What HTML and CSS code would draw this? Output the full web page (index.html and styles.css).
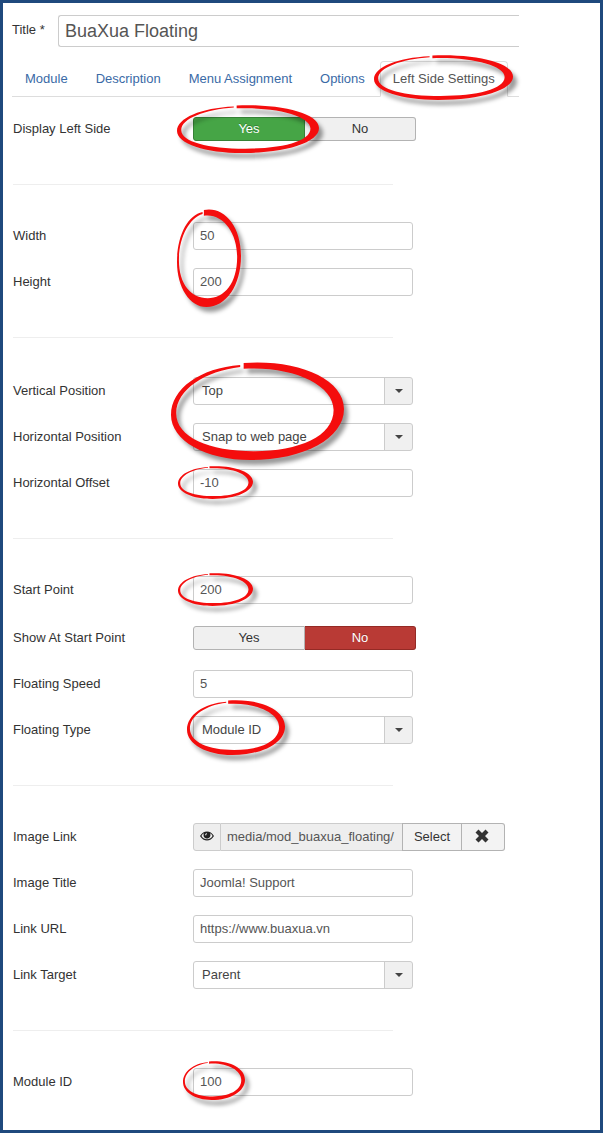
FILE: index.html
```html
<!DOCTYPE html>
<html lang="en">
<head>
    <meta charset="UTF-8">
    <meta name="viewport" content="width=device-width, initial-scale=1.0">
    <title>BuaXua Floating</title>
    <link rel="stylesheet" href="styles.css">
</head>
<body>

    <!-- shared shapes -->
    <svg class="sprite" aria-hidden="true">
        <symbol id="ring" viewBox="0 0 100 100" preserveAspectRatio="none">
            <path d="M42 1C72 -3 100 16 100 48C100 78 77 100 46 100C20 100 0 80 0 54C0 27 17 6 40 3L40 5C20 9 3 28 3 52C3 77 22 91 48 91C74 91 94 76 94 49C94 23 70 4 42 7Z"/>
        </symbol>
        <symbol id="eye" viewBox="0 0 14 10">
            <path fill-rule="evenodd" d="M0 5C2 1.700 4.300 .5 7 .5S12 1.700 14 5C12 8.300 9.700 9.500 7 9.500S2 8.300 0 5ZM1.500 5C2.300 6.600 4.300 8.200 7 8.200S11.700 6.600 12.500 5C12 3.800 11 2.800 10 2.300C11.300 5 9.700 7.600 7 7.600S2.700 5 4 2.300C3 2.800 2 3.800 1.500 5ZM5.200 3.800C5.200 4.700 6.400 4.700 6.400 3.800C6.400 3.200 7 3.100 7 2.600C7 1.900 5.200 2.300 5.200 3.800Z"/>
        </symbol>
        <symbol id="remove" viewBox="0 0 14 14">
            <path d="M3.500 .5L7 4L10.500 .5L13.500 3.500L10 7L13.500 10.500L10.500 13.500L7 10L3.500 13.500L.5 10.500L4 7L.5 3.500Z"/>
        </symbol>
    </svg>

    <form class="page">
        <div class="title-row">
            <label for="title">Title *</label>
            <input type="text" id="title" value="BuaXua Floating">
        </div>

        <ul class="tabs">
            <li><a href="#module">Module</a></li>
            <li><a href="#description">Description</a></li>
            <li><a href="#assignment">Menu Assignment</a></li>
            <li><a href="#options">Options</a></li>
            <li class="active">
                <a href="#left">Left Side Settings</a>
                <svg class="ring ring-tab" aria-hidden="true"><use href="#ring"/></svg>
            </li>
        </ul>

        <div class="fields" id="left">
            <div class="row toggle-row" role="radiogroup" aria-labelledby="display-label">
                <span class="row-label" id="display-label">Display Left Side</span>
                <div class="controls toggle">
                    <input type="radio" id="display-yes" name="display" value="1" checked>
                    <label class="yes" for="display-yes">Yes</label>
                    <input type="radio" id="display-no" name="display" value="0">
                    <label class="no" for="display-no">No</label>
                    <svg class="ring ring-yes" aria-hidden="true"><use href="#ring"/></svg>
                </div>
            </div>

            <hr>

            <div class="row">
                <label class="row-label" for="width">Width</label>
                <div class="controls">
                    <input type="text" id="width" value="50">
                    <svg class="ring ring-size" aria-hidden="true"><use href="#ring"/></svg>
                </div>
            </div>
            <div class="row">
                <label class="row-label" for="height">Height</label>
                <div class="controls">
                    <input type="text" id="height" value="200">
                </div>
            </div>

            <hr>

            <div class="position-fields">
                <div class="row">
                    <label class="row-label" for="vertical">Vertical Position</label>
                    <div class="controls dropdown">
                        <select id="vertical">
                            <option>Top</option>
                            <option>Bottom</option>
                        </select>
                        <svg class="ring ring-position" aria-hidden="true"><use href="#ring"/></svg>
                    </div>
                </div>
                <div class="row">
                    <label class="row-label" for="horizontal">Horizontal Position</label>
                    <div class="controls dropdown">
                        <select id="horizontal">
                            <option>Snap to web page</option>
                        </select>
                    </div>
                </div>
                <div class="row">
                    <label class="row-label" for="offset">Horizontal Offset</label>
                    <div class="controls">
                        <input type="text" id="offset" value="-10">
                        <svg class="ring ring-offset" aria-hidden="true"><use href="#ring"/></svg>
                    </div>
                </div>
            </div>

            <hr>

            <div class="row">
                <label class="row-label" for="start">Start Point</label>
                <div class="controls">
                    <input type="text" id="start" value="200">
                    <svg class="ring ring-start" aria-hidden="true"><use href="#ring"/></svg>
                </div>
            </div>
            <div class="row toggle-row" role="radiogroup" aria-labelledby="show-label">
                <span class="row-label" id="show-label">Show At Start Point</span>
                <div class="controls toggle">
                    <input type="radio" id="show-yes" name="show" value="1">
                    <label class="yes" for="show-yes">Yes</label>
                    <input type="radio" id="show-no" name="show" value="0" checked>
                    <label class="no" for="show-no">No</label>
                </div>
            </div>
            <div class="row">
                <label class="row-label" for="speed">Floating Speed</label>
                <div class="controls">
                    <input type="text" id="speed" value="5">
                </div>
            </div>
            <div class="row">
                <label class="row-label" for="type">Floating Type</label>
                <div class="controls dropdown">
                    <select id="type">
                        <option>Module ID</option>
                    </select>
                    <svg class="ring ring-type" aria-hidden="true"><use href="#ring"/></svg>
                </div>
            </div>

            <hr>

            <div class="row">
                <label class="row-label" for="image">Image Link</label>
                <div class="media">
                    <span class="preview"><svg class="icon-eye" aria-hidden="true"><use href="#eye"/></svg></span>
                    <input type="text" id="image" value="media/mod_buaxua_floating/" readonly>
                    <button type="button" class="select-btn">Select</button>
                    <button type="button" class="clear-btn" aria-label="Clear"><svg class="icon-remove" aria-hidden="true"><use href="#remove"/></svg></button>
                </div>
            </div>
            <div class="row">
                <label class="row-label" for="image-title">Image Title</label>
                <div class="controls">
                    <input type="text" id="image-title" value="Joomla! Support">
                </div>
            </div>
            <div class="row">
                <label class="row-label" for="url">Link URL</label>
                <div class="controls">
                    <input type="text" id="url" value="https://www.buaxua.vn">
                </div>
            </div>
            <div class="row">
                <label class="row-label" for="target">Link Target</label>
                <div class="controls dropdown">
                    <select id="target">
                        <option>Parent</option>
                    </select>
                </div>
            </div>

            <hr>

            <div class="row">
                <label class="row-label" for="module-id">Module ID</label>
                <div class="controls">
                    <input type="text" id="module-id" value="100">
                    <svg class="ring ring-module" aria-hidden="true"><use href="#ring"/></svg>
                </div>
            </div>
        </div>
    </form>

</body>
</html>
```

FILE: styles.css
```css
* {
    box-sizing: border-box;
}
body {
    margin: 0;
    min-height: 100vh;
    border: 3px solid #1f497d;
    background-color: #fff;
    color: #333;
    font-family: "Liberation Sans", Arial, sans-serif;
    font-size: 13px;
    line-height: 18px;
}
input, select, button {
    font: inherit;
    color: #555;
}
.sprite {
    position: absolute;
    width: 0;
    height: 0;
}
.page {
    padding: 12px 81px 0 9px;
}

/* title */
.title-row {
    display: flex;
    gap: 14px;
}
.title-row label {
    flex: none;
    width: 32px;
    padding-top: 6px;
    white-space: nowrap;
}
.title-row input {
    flex: 1;
    min-width: 0;
    height: 32px;
    padding: 0 6px;
    border: 1px solid #ccc;
    border-right: 0;
    border-radius: 3px 0 0 3px;
    font-size: 18px;
}

/* tabs */
.tabs {
    display: flex;
    gap: 2px;
    margin: 14px 0 16px;
    padding: 0;
    list-style: none;
    border-bottom: 1px solid #ddd;
}
.tabs li {
    position: relative;
    margin-bottom: -1px;
}
.tabs a {
    display: block;
    padding: 8px 12px;
    border: 1px solid transparent;
    border-radius: 4px 4px 0 0;
    color: #3a6aa6;
    text-decoration: none;
    white-space: nowrap;
}
.tabs .active a {
    background-color: #fff;
    border-color: #ddd #ddd #fff;
    color: #555;
}

/* fields */
.fields {
    padding-left: 1px;
}
.row {
    display: flex;
    margin-bottom: 18px;
}
.row-label {
    flex: none;
    width: 180px;
    padding-top: 5px;
}
.toggle-row .row-label {
    padding-top: 7px;
}
.controls {
    position: relative;
    width: 220px;
}
.controls input[type="text"], .controls select {
    display: block;
    width: 100%;
    height: 28px;
    padding: 0 6px 2px;
    border: 1px solid #ccc;
    border-radius: 3px;
    background-color: #fff;
}
hr {
    max-width: 380px;
    height: 1px;
    margin: 41px 0 37px;
    border: 0;
    background-color: #eee;
}
.position-fields {
    padding-top: 2px;
}

.controls select {
    appearance: none;
    padding: 0 36px 0 8px;
    color: #444;
    background-image: linear-gradient(to right, #ccc 1px, #f0f0f0 1px);
    background-position: right;
    background-repeat: no-repeat;
    background-size: 28px 100%;
}
.dropdown::after {
    content: "";
    position: absolute;
    top: 12px;
    right: 10px;
    border: 4px solid transparent;
    border-top-color: #444;
    border-bottom: 0;
    pointer-events: none;
}

/* yes / no switch */
.controls.toggle {
    display: flex;
    width: 223px;
    padding: 4px 0 2px;
}
.toggle input {
    position: absolute;
    opacity: 0;
}
.toggle label {
    flex: 1;
    height: 24px;
    line-height: 22px;
    text-align: center;
    border: 1px solid #b3b3b3;
    background-color: #f0f0f0;
}
.toggle .yes {
    border-radius: 3px 0 0 3px;
}
.toggle .no {
    border-left: 0;
    border-radius: 0 3px 3px 0;
}
.toggle input:checked + label {
    color: #fff;
    text-shadow: 0 -1px 0 rgba(0, 0, 0, 0.25);
}
.toggle input:checked + .yes {
    background-color: #46a546;
    border-color: #378137;
}
.toggle input:checked + .no {
    background-color: #b93a35;
    border-color: #942a25;
}

/* image picker */
.media {
    display: flex;
    height: 28px;
}
.media input {
    width: 181px;
    padding: 0 6px;
    border: 1px solid #ccc;
    border-width: 1px 0;
    background-color: #eee;
}
.preview {
    display: flex;
    align-items: center;
    justify-content: center;
    width: 28px;
    padding-bottom: 3px;
    border: 1px solid #ccc;
    border-radius: 3px 0 0 3px;
    background-color: #eee;
}
.media button {
    padding: 0;
    border: 1px solid #b3b3b3;
    background-color: #f3f3f3;
    color: #333;
}
.media .select-btn {
    width: 60px;
}
.media .clear-btn {
    display: flex;
    align-items: center;
    justify-content: center;
    width: 43px;
    padding: 0 3px 3px 0;
    border-left: 0;
    border-radius: 0 3px 3px 0;
}
.icon-eye {
    width: 14px;
    height: 10px;
    fill: #222;
}
.icon-remove {
    width: 14px;
    height: 14px;
    fill: #333;
}

/* red rings around the settings to change */
.ring {
    position: absolute;
    z-index: 1;
    overflow: visible;
    fill: #f40d0d;
    filter: drop-shadow(4px 5px 2px rgba(0, 0, 0, 0.4));
    pointer-events: none;
}
.ring-tab {
    top: -6px;
    left: -6px;
    width: 139px;
    height: 45px;
}
.ring-yes {
    top: -8px;
    left: -16px;
    width: 142px;
    height: 48px;
}
.ring-size {
    top: -13px;
    left: -16px;
    width: 64px;
    height: 98px;
}
.ring-position {
    top: -15px;
    left: -22px;
    width: 173px;
    height: 98px;
}
.ring-offset, .ring-start {
    top: -3px;
    left: -15px;
    width: 75px;
    height: 33px;
}
.ring-type {
    top: -16px;
    left: -6px;
    width: 98px;
    height: 55px;
}
.ring-module {
    top: -7px;
    left: -10px;
    width: 62px;
    height: 39px;
}
```
